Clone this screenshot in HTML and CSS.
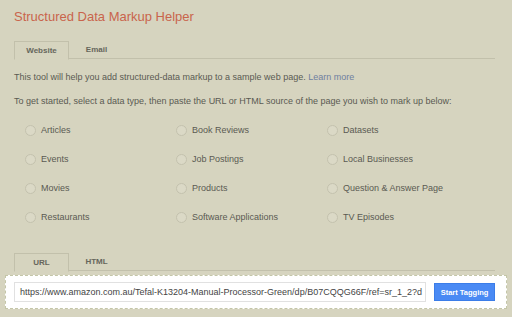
FILE: index.html
```html
<!DOCTYPE html>
<html lang="en">
<head>
    <meta charset="UTF-8">
    <title>Structured Data Markup Helper</title>
    <link rel="stylesheet" href="styles.css">
</head>
<body>
    <div class="page">
        <h1 class="title">Structured Data Markup Helper</h1>

        <div class="tabs">
            <div class="tab active">Website</div>
            <div class="tab">Email</div>
        </div>

        <p class="intro">This tool will help you add structured-data markup to a sample web page. <a href="#">Learn more</a></p>
        <p class="intro">To get started, select a data type, then paste the URL or HTML source of the page you wish to mark up below:</p>

        <div class="types">
            <label class="type"><span class="radio"></span>Articles</label>
            <label class="type"><span class="radio"></span>Book Reviews</label>
            <label class="type"><span class="radio"></span>Datasets</label>
            <label class="type"><span class="radio"></span>Events</label>
            <label class="type"><span class="radio"></span>Job Postings</label>
            <label class="type"><span class="radio"></span>Local Businesses</label>
            <label class="type"><span class="radio"></span>Movies</label>
            <label class="type"><span class="radio"></span>Products</label>
            <label class="type"><span class="radio"></span>Question &amp; Answer Page</label>
            <label class="type"><span class="radio"></span>Restaurants</label>
            <label class="type"><span class="radio"></span>Software Applications</label>
            <label class="type"><span class="radio"></span>TV Episodes</label>
        </div>

        <div class="tabs source-tabs">
            <div class="tab active">URL</div>
            <div class="tab">HTML</div>
        </div>
    </div>

    <div class="url-panel">
        <div class="url-input">https://www.amazon.com.au/Tefal-K13204-Manual-Processor-Green/dp/B07CQQG66F/ref=sr_1_2?d</div>
        <button class="start-btn">Start Tagging</button>
    </div>
</body>
</html>
```

FILE: styles.css
```css
:root {
    --bg-color: #d6d4bf;
    --text-color: #5a5a52;
    --line-color: #c2c0ab;
    --title-color: #c9644c;
    --link-color: #6f80a0;
    --btn-color: #4a8af4;
}

* {
    box-sizing: border-box;
    margin: 0;
    padding: 0;
}

body {
    font-family: 'Liberation Sans', Arial, sans-serif;
    background-color: var(--bg-color);
    color: var(--text-color);
    width: 512px;
    height: 317px;
    overflow: hidden;
}

.page {
    padding: 8px 17px 0 14px;
}

.title {
    font-size: 13px;
    font-weight: 400;
    line-height: 18px;
    color: var(--title-color);
}

.tabs {
    display: flex;
    margin-top: 15px;
    border-bottom: 1px solid var(--line-color);
    height: 18px;
}

.tab {
    width: 55px;
    height: 18px;
    font-size: 8px;
    font-weight: 700;
    line-height: 17px;
    text-align: center;
    color: #66665c;
}

.tab.active {
    border: 1px solid var(--line-color);
    border-bottom: 1px solid var(--bg-color);
    background-color: var(--bg-color);
    height: 19px;
}

.intro {
    font-size: 9px;
    line-height: 12px;
    margin-top: 12px;
}

.intro a {
    color: var(--link-color);
    text-decoration: none;
}

.types {
    display: grid;
    grid-template-columns: 151px 151px 151px;
    row-gap: 17px;
    padding-left: 11px;
    margin-top: 17px;
}

.type {
    display: flex;
    align-items: center;
    gap: 5px;
    height: 12px;
    font-size: 9px;
}

.radio {
    width: 11px;
    height: 11px;
    border: 1px solid #c4c2ae;
    border-radius: 50%;
    background-color: #dbd9c6;
}

.source-tabs {
    margin-top: 30px;
}

.url-panel {
    display: flex;
    align-items: center;
    gap: 8px;
    margin: 4px 5px 0 5px;
    padding: 0 11px 0 8px;
    height: 34px;
    background-color: #fff;
    border: 1px dashed #c4c6a8;
}

.url-input {
    width: 413px;
    height: 20px;
    border: 1px solid #e1e1e1;
    font-size: 9px;
    line-height: 18px;
    padding-left: 5px;
    color: #444;
    white-space: nowrap;
    overflow: hidden;
}

.start-btn {
    width: 61px;
    height: 18px;
    border: 1px solid #3b7de8;
    background-color: var(--btn-color);
    color: #fff;
    font-family: inherit;
    font-size: 7.5px;
    font-weight: 700;
}
```
